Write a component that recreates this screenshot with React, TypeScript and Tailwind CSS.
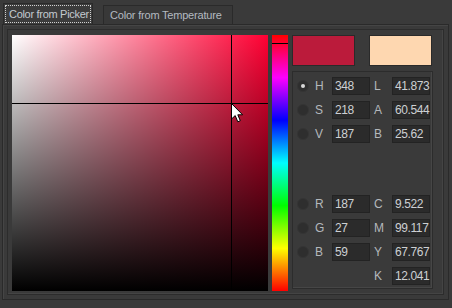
import React from 'react';

const hsv = [
  { key: 'H', value: '348', right: 'L', rightValue: '41.873', checked: true },
  { key: 'S', value: '218', right: 'A', rightValue: '60.544' },
  { key: 'V', value: '187', right: 'B', rightValue: '25.62' },
];

const rgb = [
  { key: 'R', value: '187', right: 'C', rightValue: '9.522' },
  { key: 'G', value: '27', right: 'M', rightValue: '99.117' },
  { key: 'B', value: '59', right: 'Y', rightValue: '67.767' },
  { key: '', value: '', right: 'K', rightValue: '12.041' },
];

type Row = { key: string; value: string; right: string; rightValue: string; checked?: boolean };

const Field: React.FC<{ value: string }> = ({ value }) => (
  <div className="w-[38px] h-[18px] bg-[#2b2b2b] border border-[#232323] pl-[2px] leading-[17px] text-[12px] tracking-[-0.4px] text-[#cdd0d3] whitespace-nowrap">
    {value}
  </div>
);

const ValueRow: React.FC<{ row: Row }> = ({ row }) => (
  <div className="flex items-center h-[18px]">
    <div className="w-[20px] flex justify-center">
      {row.key && (
        <div className="w-[12px] h-[12px] rounded-full bg-[#2e2e2e] border border-[#353535] flex items-center justify-center">
          {row.checked && <div className="w-[4px] h-[4px] rounded-full bg-[#d8d8d8]" />}
        </div>
      )}
    </div>
    <div className="w-[19px] text-[12px] text-[#b4b8bc] pl-[2px]">{row.key}</div>
    {row.key ? <Field value={row.value} /> : <div className="w-[38px]" />}
    <div className="w-[22px] text-[12px] text-[#b4b8bc] pl-[4px]">{row.right}</div>
    <Field value={row.rightValue} />
  </div>
);

export default function App() {
  return (
    <div className="w-[452px] h-[308px] bg-[#3a3a3a] overflow-hidden font-['Liberation_Sans',Arial,sans-serif] select-none">
      {/* tabs */}
      <div className="flex items-end h-[24px] pl-[3px] gap-[10px]">
        <div className="h-[21px] w-[90px] border border-b-0 border-[#2a2a2a] bg-[#3c3c3c] p-px">
          <div className="h-full border border-dotted border-[#d0d0d0] flex items-center pl-[3px] text-[11px] tracking-[-0.3px] text-[#c4cad0] whitespace-nowrap">
            Color from Picker
          </div>
        </div>
        <div className="h-[19px] w-[130px] border border-b-0 border-[#2a2a2a] bg-[#383838] flex items-center pl-[6px] text-[11px] tracking-[-0.2px] text-[#b4bac0] whitespace-nowrap">
          Color from Temperature
        </div>
      </div>

      {/* tab panel */}
      <div className="ml-[2px] w-[447px] h-[276px] border border-[#2a2a2a] shadow-[inset_1px_1px_0_#454545] p-[4px]">
        <div className="w-[437px] h-[266px] border border-[#2c2c2c] shadow-[inset_-1px_-1px_0_#444] flex pl-[4px] pt-[5px] gap-[4px]">
          {/* saturation / value field */}
          <div className="relative w-[256px] h-[256px] bg-[linear-gradient(to_right,#ffffff,#ff0033)]">
            <div className="absolute inset-0 bg-[linear-gradient(to_bottom,rgba(0,0,0,0),#000000)]" />
            <div className="absolute left-[219px] top-0 w-px h-full bg-black" />
            <div className="absolute top-[68px] left-0 h-px w-full bg-black" />
            <svg className="absolute left-[219px] top-[68px]" width="13" height="20" viewBox="0 0 13 20">
              <path d="M0.5 0.5 L0.5 16 L4.2 12.6 L6.8 18.8 L9.3 17.7 L6.8 11.8 L11.6 11.8 Z" fill="#fff" stroke="#000" strokeWidth="1" />
            </svg>
          </div>

          {/* hue strip */}
          <div className="relative w-[16px] h-[256px] bg-[linear-gradient(to_bottom,#ff0000,#ff00ff,#0000ff,#00ffff,#00ff00,#ffff00,#ff0000)]">
            <div className="absolute top-[8px] left-0 w-full h-px bg-black" />
          </div>

          {/* right side */}
          <div className="flex flex-col">
            <div className="flex gap-[14px]">
              <div className="w-[63px] h-[31px] border border-[#2a2a2a] bg-[#bb1b3b]" />
              <div className="w-[63px] h-[31px] border border-[#2a2a2a] bg-[#fed7b0]" />
            </div>
            <div className="mt-[5px] w-[141px] h-[218px] border border-[#2c2c2c] shadow-[inset_-1px_-1px_0_#464646] pt-[5px] flex flex-col">
              <div className="flex flex-col gap-[6px]">
                {hsv.map((r) => (
                  <ValueRow key={r.right} row={r} />
                ))}
              </div>
              <div className="flex flex-col gap-[6px] mt-[52px]">
                {rgb.map((r) => (
                  <ValueRow key={r.right} row={r} />
                ))}
              </div>
            </div>
          </div>
        </div>
      </div>
    </div>
  );
}
